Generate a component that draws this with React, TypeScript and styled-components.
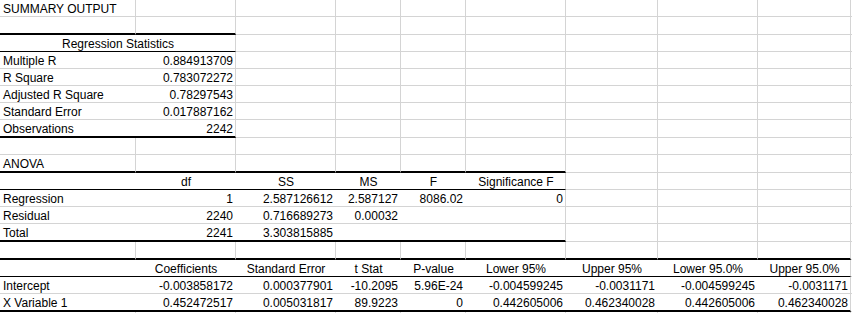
import React from "react";
import styled, { createGlobalStyle } from "styled-components";

type Align = "left" | "center" | "right";
type Edge = "grid" | "thin" | "thick";

interface Table {
	top: number;
	bottom: number;
	last: number;
}

const COLS = [136, 100, 100, 65, 65, 100, 92, 100, 93, 100];
const ROWS = [17, 18, 17, 17, 17, 17, 17, 18, 17, 18, 17, 17, 17, 18, 18, 17, 17, 18, 17];

// each table: header row is its top row, thick rule above & below
const TABLES: Table[] = [
	{ top: 2, bottom: 7, last: 1 },
	{ top: 10, bottom: 13, last: 5 },
	{ top: 15, bottom: 17, last: 8 },
];

const DATA: string[][] = [
	["SUMMARY OUTPUT"],
	[],
	["Regression Statistics"],
	["Multiple R", "0.884913709"],
	["R Square", "0.783072272"],
	["Adjusted R Square", "0.78297543"],
	["Standard Error", "0.017887162"],
	["Observations", "2242"],
	[],
	["ANOVA"],
	["", "df", "SS", "MS", "F", "Significance F"],
	["Regression", "1", "2.587126612", "2.587127", "8086.02", "0"],
	["Residual", "2240", "0.716689273", "0.00032"],
	["Total", "2241", "3.303815885"],
	[],
	["", "Coefficients", "Standard Error", "t Stat", "P-value", "Lower 95%", "Upper 95%", "Lower 95.0%", "Upper 95.0%"],
	["Intercept", "-0.003858172", "0.000377901", "-10.2095", "5.96E-24", "-0.004599245", "-0.0031171", "-0.004599245", "-0.0031171"],
	["X Variable 1", "0.452472517", "0.005031817", "89.9223", "0", "0.442605006", "0.462340028", "0.442605006", "0.462340028"],
	[],
];

const HEADER_ROWS = TABLES.map((t) => t.top);

const bottomEdge = (r: number, c: number): Edge => {
	for (const t of TABLES) {
		if (c > t.last) continue;
		if (r === t.top - 1 || r === t.bottom) return "thick";
		if (r === t.top) return "thin";
	}
	return "grid";
};

const hasRightLine = (r: number, c: number): boolean => {
	for (const t of TABLES) {
		if (r >= t.top && r <= t.bottom && c < t.last) return false;
	}
	return true;
};

const GlobalStyle = createGlobalStyle`
	html, body {
		margin: 0;
		padding: 0;
		background: #ffffff;
		overflow: hidden;
	}
`;

const Sheet = styled.div`
	display: grid;
	grid-template-columns: ${COLS.map((w) => `${w}px`).join(" ")};
	grid-template-rows: ${ROWS.map((h) => `${h}px`).join(" ")};
	height: 313px;
	overflow: hidden;
	font-family: "Liberation Sans", Arial, sans-serif;
	font-size: 12px;
	color: #000000;
	background: #ffffff;
`;

const Cell = styled.div<{ $align: Align; $bottom: Edge; $right: boolean; $span: number }>`
	grid-column: span ${({ $span }) => $span};
	box-sizing: border-box;
	display: flex;
	align-items: flex-end;
	justify-content: ${({ $align }) =>
		$align === "left" ? "flex-start" : $align === "center" ? "center" : "flex-end"};
	padding: 0 ${({ $right }) => ($right ? 2 : 3)}px 0 3px;
	line-height: 14px;
	white-space: nowrap;
	border-right: ${({ $right }) => ($right ? "1px solid #d4d4d4" : "none")};
	border-bottom: ${({ $bottom }) =>
		$bottom === "thick" ? "2px solid #000000" : $bottom === "thin" ? "1px solid #000000" : "1px solid #d4d4d4"};
`;

export default function App() {
	const cells: React.ReactNode[] = [];

	ROWS.forEach((_, r) => {
		const row = DATA[r] || [];
		let c = 0;
		while (c < COLS.length) {
			const span = r === 2 && c === 0 ? 2 : 1;
			const last = c + span - 1;
			const text = row[c] || "";
			const align: Align = HEADER_ROWS.includes(r) ? "center" : c === 0 ? "left" : "right";
			cells.push(
				<Cell
					key={`${r}-${c}`}
					$align={align}
					$span={span}
					$bottom={bottomEdge(r, c)}
					$right={hasRightLine(r, last)}>
					{text}
				</Cell>
			);
			c += span;
		}
	});

	return (
		<>
			<GlobalStyle />
			<Sheet>{cells}</Sheet>
		</>
	);
}
